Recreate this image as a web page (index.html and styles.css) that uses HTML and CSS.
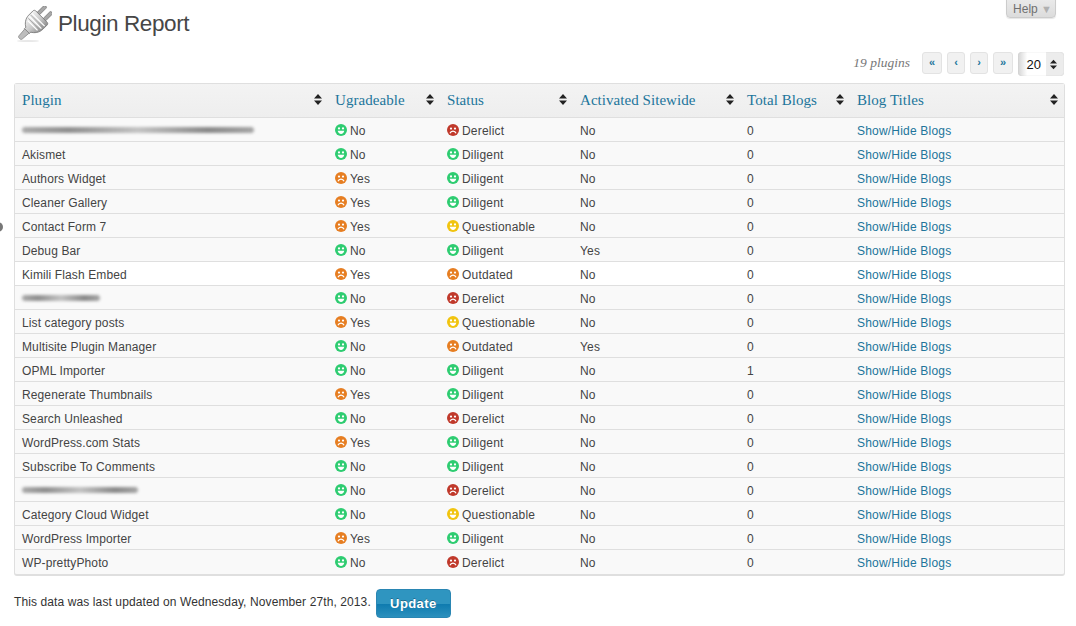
FILE: index.html
```html
<!DOCTYPE html>
<html lang="en">
<head>
<meta charset="utf-8">
<title>Plugin Report</title>
<link rel="stylesheet" href="styles.css">
</head>
<body>
<svg class="defs" width="0" height="0" aria-hidden="true">
  <symbol id="happy" viewBox="0 0 12 12"><circle cx="6" cy="6" r="6" fill="currentColor"/><circle cx="4" cy="4.4" r="1.1" fill="#fff"/><circle cx="8" cy="4.4" r="1.1" fill="#fff"/><path d="M2.7 6.8h6.6C9 8.8 7.6 9.9 6 9.9S3 8.8 2.7 6.8z" fill="#fff"/></symbol>
  <symbol id="sad" viewBox="0 0 12 12"><circle cx="6" cy="6" r="6" fill="currentColor"/><circle cx="4" cy="4.6" r="1.1" fill="#fff"/><circle cx="8" cy="4.6" r="1.1" fill="#fff"/><path d="M3 9.3C3.5 7.900 4.600 7.200 6 7.200s2.500.7 3 2.100" fill="none" stroke="#fff" stroke-width="1.2"/></symbol>
  <symbol id="sort" viewBox="0 0 8 11"><path d="M4 0l4 4.400H0zM4 11L0 6.600h8z" fill="currentColor"/></symbol>
</svg>
<span class="edge-tab"></span>
<button class="help" type="button">Help <span class="help-arrow">▼</span></button>
<header class="title-row">
  <svg class="plug" viewBox="0 0 36 36" width="36" height="36" aria-hidden="true">
    <defs><linearGradient id="plugfill" x1="0" y1="0" x2="1" y2="0"><stop offset="0" stop-color="#f2f2f2"/><stop offset=".55" stop-color="#c9c9c9"/><stop offset="1" stop-color="#8f8f8f"/></linearGradient></defs>
    <ellipse cx="12" cy="35" rx="11" ry="1" fill="#e8e8e8"/>
    <g transform="rotate(45 18 18)">
      <rect x="12" y="-3" width="3.400" height="12" rx="1.500" fill="#a8a8a8" stroke="#707070" stroke-width=".7"/>
      <rect x="20.600" y="-3" width="3.400" height="12" rx="1.500" fill="#a8a8a8" stroke="#707070" stroke-width=".7"/>
      <path d="M8 9.500c0-1.200.8-2 2-2h16c1.200 0 2 .8 2 2v6c0 5-3.500 9-6.500 10.500v2h-7v-2C11.500 24.500 8 20.500 8 15.500z" fill="url(#plugfill)" stroke="#767676" stroke-width=".8"/>
      <path d="M9 12h18M9.500 16h17M11 20h14" stroke="#fff" stroke-width="1.300"/>
      <path d="M9 14h18M10 18h16" stroke="#9b9b9b" stroke-width=".7"/>
      <path d="M15 28h6l-.7 9c-.1 1-.9 1.500-2.300 1.500s-2.200-.5-2.300-1.500z" fill="#bdbdbd" stroke="#808080" stroke-width=".7"/>
    </g>
  </svg>
  <h1>Plugin Report</h1>
</header>
<nav class="pager">
  <span class="count">19 plugins</span>
  <a class="page-btn wide" href="#">«</a>
  <a class="page-btn" href="#">‹</a>
  <a class="page-btn" href="#">›</a>
  <a class="page-btn wide" href="#">»</a>
  <span class="per-page"><span class="per-value">20</span><svg class="per-sort"><use href="#sort"/></svg></span>
</nav>
<table class="report">
  <colgroup><col class="c1"><col class="c2"><col class="c3"><col class="c4"><col class="c5"><col class="c6"></colgroup>
  <thead>
    <tr>
      <th><div class="th"><span>Plugin</span><svg class="sort"><use href="#sort"/></svg></div></th>
      <th><div class="th"><span>Ugradeable</span><svg class="sort"><use href="#sort"/></svg></div></th>
      <th><div class="th"><span>Status</span><svg class="sort"><use href="#sort"/></svg></div></th>
      <th><div class="th"><span>Activated Sitewide</span><svg class="sort"><use href="#sort"/></svg></div></th>
      <th><div class="th"><span>Total Blogs</span><svg class="sort"><use href="#sort"/></svg></div></th>
      <th><div class="th"><span>Blog Titles</span><svg class="sort"><use href="#sort"/></svg></div></th>
    </tr>
  </thead>
  <tbody>
    <tr><td><span class="blur b1"></span></td><td><svg class="face good"><use href="#happy"/></svg>No</td><td><svg class="face bad"><use href="#sad"/></svg>Derelict</td><td>No</td><td>0</td><td><a href="#">Show/Hide Blogs</a></td></tr>
    <tr><td>Akismet</td><td><svg class="face good"><use href="#happy"/></svg>No</td><td><svg class="face good"><use href="#happy"/></svg>Diligent</td><td>No</td><td>0</td><td><a href="#">Show/Hide Blogs</a></td></tr>
    <tr><td>Authors Widget</td><td><svg class="face warn"><use href="#sad"/></svg>Yes</td><td><svg class="face good"><use href="#happy"/></svg>Diligent</td><td>No</td><td>0</td><td><a href="#">Show/Hide Blogs</a></td></tr>
    <tr><td>Cleaner Gallery</td><td><svg class="face warn"><use href="#sad"/></svg>Yes</td><td><svg class="face good"><use href="#happy"/></svg>Diligent</td><td>No</td><td>0</td><td><a href="#">Show/Hide Blogs</a></td></tr>
    <tr><td>Contact Form 7</td><td><svg class="face warn"><use href="#sad"/></svg>Yes</td><td><svg class="face ok"><use href="#happy"/></svg>Questionable</td><td>No</td><td>0</td><td><a href="#">Show/Hide Blogs</a></td></tr>
    <tr><td>Debug Bar</td><td><svg class="face good"><use href="#happy"/></svg>No</td><td><svg class="face good"><use href="#happy"/></svg>Diligent</td><td>Yes</td><td>0</td><td><a href="#">Show/Hide Blogs</a></td></tr>
    <tr class="hover"><td>Kimili Flash Embed</td><td><svg class="face warn"><use href="#sad"/></svg>Yes</td><td><svg class="face warn"><use href="#sad"/></svg>Outdated</td><td>No</td><td>0</td><td><a href="#">Show/Hide Blogs</a></td></tr>
    <tr><td><span class="blur b2"></span></td><td><svg class="face good"><use href="#happy"/></svg>No</td><td><svg class="face bad"><use href="#sad"/></svg>Derelict</td><td>No</td><td>0</td><td><a href="#">Show/Hide Blogs</a></td></tr>
    <tr><td>List category posts</td><td><svg class="face warn"><use href="#sad"/></svg>Yes</td><td><svg class="face ok"><use href="#happy"/></svg>Questionable</td><td>No</td><td>0</td><td><a href="#">Show/Hide Blogs</a></td></tr>
    <tr><td>Multisite Plugin Manager</td><td><svg class="face good"><use href="#happy"/></svg>No</td><td><svg class="face warn"><use href="#sad"/></svg>Outdated</td><td>Yes</td><td>0</td><td><a href="#">Show/Hide Blogs</a></td></tr>
    <tr><td>OPML Importer</td><td><svg class="face good"><use href="#happy"/></svg>No</td><td><svg class="face good"><use href="#happy"/></svg>Diligent</td><td>No</td><td>1</td><td><a href="#">Show/Hide Blogs</a></td></tr>
    <tr><td>Regenerate Thumbnails</td><td><svg class="face warn"><use href="#sad"/></svg>Yes</td><td><svg class="face good"><use href="#happy"/></svg>Diligent</td><td>No</td><td>0</td><td><a href="#">Show/Hide Blogs</a></td></tr>
    <tr><td>Search Unleashed</td><td><svg class="face good"><use href="#happy"/></svg>No</td><td><svg class="face bad"><use href="#sad"/></svg>Derelict</td><td>No</td><td>0</td><td><a href="#">Show/Hide Blogs</a></td></tr>
    <tr><td>WordPress.com Stats</td><td><svg class="face warn"><use href="#sad"/></svg>Yes</td><td><svg class="face good"><use href="#happy"/></svg>Diligent</td><td>No</td><td>0</td><td><a href="#">Show/Hide Blogs</a></td></tr>
    <tr><td>Subscribe To Comments</td><td><svg class="face good"><use href="#happy"/></svg>No</td><td><svg class="face good"><use href="#happy"/></svg>Diligent</td><td>No</td><td>0</td><td><a href="#">Show/Hide Blogs</a></td></tr>
    <tr><td><span class="blur b3"></span></td><td><svg class="face good"><use href="#happy"/></svg>No</td><td><svg class="face bad"><use href="#sad"/></svg>Derelict</td><td>No</td><td>0</td><td><a href="#">Show/Hide Blogs</a></td></tr>
    <tr><td>Category Cloud Widget</td><td><svg class="face good"><use href="#happy"/></svg>No</td><td><svg class="face ok"><use href="#happy"/></svg>Questionable</td><td>No</td><td>0</td><td><a href="#">Show/Hide Blogs</a></td></tr>
    <tr><td>WordPress Importer</td><td><svg class="face warn"><use href="#sad"/></svg>Yes</td><td><svg class="face good"><use href="#happy"/></svg>Diligent</td><td>No</td><td>0</td><td><a href="#">Show/Hide Blogs</a></td></tr>
    <tr><td>WP-prettyPhoto</td><td><svg class="face good"><use href="#happy"/></svg>No</td><td><svg class="face bad"><use href="#sad"/></svg>Derelict</td><td>No</td><td>0</td><td><a href="#">Show/Hide Blogs</a></td></tr>
  </tbody>
</table>
<footer class="foot">
  <span class="foot-text">This data was last updated on Wednesday, November 27th, 2013.</span>
  <button class="update" type="button">Update</button>
</footer>
</body>
</html>
```
FILE: styles.css
```css
* { box-sizing: border-box; }
html, body { margin: 0; height: 626px; overflow: hidden; }
body {
  position: relative;
  padding: 0 11px 0 14px;
  background: #fff;
  color: #333;
  font: 12px/16px "Liberation Sans", Arial, sans-serif;
}
.defs { position: absolute; }
.edge-tab {
  position: absolute; left: -7px; top: 222px;
  width: 10px; height: 10px; border-radius: 50%;
  background: #777;
}
.help {
  position: absolute; left: 1006px; top: -4px;
  width: 50px; height: 22px;
  padding: 3px 0 0 3px;
  border: 1px solid #ccc; border-radius: 0 0 4px 4px;
  background: linear-gradient(#ececec, #dcdcdc);
  color: #707070;
  font: 12px "Liberation Sans", sans-serif;
  box-shadow: 0 1px 1px rgba(0,0,0,.1);
}
.help-arrow { color: #b0b0b0; font-size: 11px; }
.title-row {
  display: flex; align-items: center; gap: 6px;
  height: 52px;
  padding-left: 2px;
  padding-bottom: 4px;
}
.plug { flex: none; }
h1 {
  margin: 0;
  font: 400 22.5px/30px "Liberation Sans", Arial, sans-serif;
  letter-spacing: -.4px;
  color: #464646;
}
.pager {
  display: flex; align-items: flex-start; justify-content: flex-end;
  height: 31px;
  gap: 5px;
  padding-right: 1px;
}
.count {
  margin-right: 7px;
  padding-top: 3px;
  font: italic 13.5px/16px "Liberation Serif", serif;
  color: #777;
}
.page-btn {
  display: block; width: 18px; height: 22px;
  border: 1px solid #e3e3e3; border-radius: 3px;
  background: #f1f1f1;
  color: #21759b;
  font: bold 11px/18px "Liberation Sans", sans-serif;
  text-align: center; text-decoration: none;
}
.page-btn.wide { width: 20px; }
.per-page {
  display: flex; align-items: center;
  width: 46px; height: 24px;
  border-radius: 4px;
  background: linear-gradient(90deg, #d4d4d4, #fff 20%, #fff 61%, #ececec 62%);
  box-shadow: inset 0 0 1px #bbb;
  color: #111;
  font: 13px "Liberation Sans", sans-serif;
}
.per-value { width: 24px; text-align: right; padding-right: 1px; }
.per-sort { width: 7px; height: 11px; margin-left: 8px; color: #222; }
.report {
  width: 1051px;
  table-layout: fixed;
  border-collapse: separate;
  border-spacing: 0;
  border: 1px solid #dfdfdf;
  border-bottom-width: 2px;
  border-radius: 3px;
  background: #f9f9f9;
}
.c1 { width: 312px; }
.c2 { width: 112px; }
.c3 { width: 133px; }
.c4 { width: 167px; }
.c5 { width: 110px; }
th {
  height: 34px;
  padding: 0 8px 2px;
  background: linear-gradient(#f3f3f3, #eee);
  border-bottom: 1px solid #dfdfdf;
  text-align: left;
  font: 400 15px/18px "Liberation Serif", serif;
  letter-spacing: .05px;
  color: #21759b;
}
.th { display: flex; align-items: center; justify-content: space-between; }
.sort { width: 8px; height: 11px; color: #222; flex: none; margin-right: -3px; }
th:last-child .sort { margin-right: -2px; }
td {
  height: 24px;
  padding: 2px 8px 0;
  border-bottom: 1px solid #dfdfdf;
  font-size: 12px;
  line-height: 16px;
  letter-spacing: .2px;
  color: #444;
  white-space: nowrap;
  vertical-align: middle;
}
th:first-child, td:first-child { padding-left: 7px; }
td:first-child { letter-spacing: .12px; }
tbody tr:last-child td { border-bottom: 0; }
.hover td { background: #fff; }
td a { color: #21759b; text-decoration: none; }
.face { width: 12px; height: 12px; margin-right: 3px; vertical-align: -1px; }
.good { color: #2ecc71; }
.warn { color: #e67e22; }
.bad { color: #c0392b; }
.ok { color: #f1c40f; }
.blur {
  display: block; height: 6px; margin-top: -1px;
  border-radius: 3px;
  background: linear-gradient(90deg, #aaa, #8e8e8e 20%, #c2c2c2 50%, #888 80%, #a5a5a5);
  filter: blur(1.6px);
}
.b1 { width: 232px; }
.b2 { width: 78px; }
.b3 { width: 116px; }
.foot {
  display: flex; align-items: center; gap: 5px;
  margin-top: 13px;
  color: #333;
  letter-spacing: .105px;
}
.foot-text { padding-bottom: 3px; }
.update {
  width: 75px; height: 29px;
  padding: 0;
  border: 1px solid #2a86b3; border-radius: 4px;
  background: linear-gradient(#2f95c0 0 50%, #0d7aae 50%, #2c90bd);
  color: #fff;
  font: bold 13px "Liberation Sans", sans-serif;
  letter-spacing: .4px;
  text-shadow: 0 -1px 0 rgba(0,0,0,.3);
}
```
